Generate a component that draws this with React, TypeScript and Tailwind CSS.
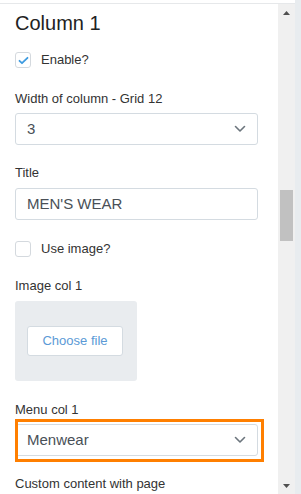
import React from "react";

const Chevron = () => (
  <svg width="12" height="8" viewBox="0 0 12 8" className="shrink-0">
    <polyline points="1.5,1.5 6,6 10.5,1.5" fill="none" stroke="#6c757d" strokeWidth="1.6" strokeLinecap="round" strokeLinejoin="round" />
  </svg>
);

const Checkbox = ({ checked }: { checked?: boolean }) => (
  <div className="w-4 h-4 rounded-[3px] border border-[#d4d9de] bg-white flex items-center justify-center shrink-0">
    {checked && (
      <svg width="11" height="9" viewBox="0 0 11 9">
        <polyline points="1.5,4.8 4,7.2 9.5,1.8" fill="none" stroke="#3e9be0" strokeWidth="1.8" strokeLinecap="round" strokeLinejoin="round" />
      </svg>
    )}
  </div>
);

const Label = ({ children, className = "" }: { children: React.ReactNode; className?: string }) => (
  <div className={`text-[13px] leading-[18px] text-[#333] ${className}`}>{children}</div>
);

const Select = ({ value }: { value: string }) => (
  <div className="w-[243px] h-8 rounded-[3px] border border-[#d4dbe1] bg-white flex items-center justify-between pl-[11px] pr-[11px]">
    <span className="text-[15px] text-[#495057]">{value}</span>
    <Chevron />
  </div>
);

export default function App() {
  return (
    <div className="w-[301px] h-[494px] overflow-hidden flex bg-white" style={{ fontFamily: '"Liberation Sans", Arial, sans-serif' }}>
      <div className="w-[295px] flex flex-col">
        <div className="h-[3px] bg-white" />
        <div className="h-px bg-[#e6e8ea]" />
        <div className="flex flex-1 min-h-0">
          <div className="w-[278px] pl-[15px] flex flex-col">
            <div className="mt-[7px] text-[20px] leading-[24px] text-[#222]">Column 1</div>
            <div className="mt-[17px] flex items-center gap-[10px] h-4">
              <Checkbox checked />
              <span className="text-[13px] text-[#333]">Enable?</span>
            </div>
            <Label className="mt-[22px]">Width of column - Grid 12</Label>
            <div className="mt-[5px]">
              <Select value="3" />
            </div>
            <Label className="mt-[19px]">Title</Label>
            <div className="mt-[6px] w-[243px] h-8 rounded-[3px] border border-[#d4dbe1] bg-white flex items-center pl-[11px]">
              <span className="text-[15px] text-[#495057]">MEN'S WEAR</span>
            </div>
            <div className="mt-[21px] flex items-center gap-[10px] h-4">
              <Checkbox />
              <span className="text-[13px] text-[#333]">Use image?</span>
            </div>
            <Label className="mt-[20px]">Image col 1</Label>
            <div className="mt-[6px] w-[122px] h-20 rounded-[3px] bg-[#e9ecef] flex items-center pl-[12px]">
              <div className="w-[96px] h-[30px] rounded-[3px] border border-[#d4dbe1] bg-white flex items-center justify-center text-[13px] text-[#5b9ad6]">
                Choose file
              </div>
            </div>
            <Label className="mt-[20px]">Menu col 1</Label>
            <div className="mt-[5px] relative">
              <Select value="Menwear" />
              <div className="absolute left-0 top-[-5px] w-[249px] h-[43px] border-[3px] border-[#ff7f00] pointer-events-none" />
            </div>
            <Label className="mt-[19px]">Custom content with page</Label>
          </div>
          <div className="w-[17px] bg-[#f0f0f0] flex flex-col items-center relative">
            <svg width="7" height="4" viewBox="0 0 7 4" className="mt-[7px]">
              <polygon points="0,4 7,4 3.5,0" fill="#505050" />
            </svg>
            <div className="mt-[175px] w-[13px] h-[51px] bg-[#c1c1c1]" />
            <div className="flex-1" />
            <svg width="7" height="4" viewBox="0 0 7 4" className="mb-[6px]">
              <polygon points="0,0 7,0 3.5,4" fill="#505050" />
            </svg>
          </div>
        </div>
      </div>
      <div className="w-[6px] bg-[#e8ecef]" />
    </div>
  );
}
